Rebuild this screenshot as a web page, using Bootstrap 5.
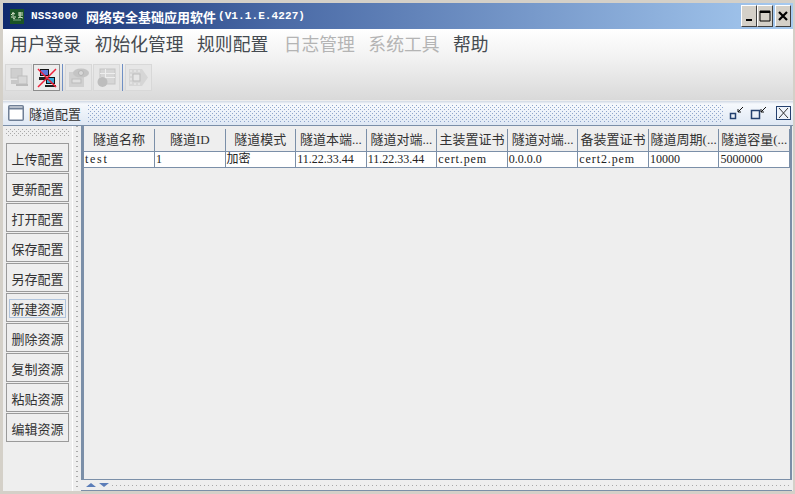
<!DOCTYPE html>
<html lang="zh"><head><meta charset="utf-8"><title>NSS3000</title>
<link href="https://cdn.jsdelivr.net/npm/bootstrap@5.3.0/dist/css/bootstrap.min.css" rel="stylesheet">
<style>
html,body{height:494px;overflow:hidden;background:#d4d0c8}
body{font-family:"Liberation Serif","Noto Sans CJK SC",serif;color:#222}
.app-shell{width:795px;height:494px;padding:3px 2px 3px 3px}
.app-inner{height:488px;background:#eee}
.title-bar{height:26px;background:linear-gradient(90deg,#0f2a6e 0,#4a6aa6 35%,#a6caf0 100%);color:#fff;padding-left:7px}
.title-logo{width:14px;height:15px;margin-right:7px}
.title-mono{font:bold 11px "Liberation Mono",monospace;letter-spacing:.1px}
.title-cn{font:bold 13px "Noto Sans CJK SC",sans-serif;margin:0 2px 0 8px}
.win-btn{width:16px;height:22px;background:#d4d0c8;border:1px solid;border-color:#fff #404040 #404040 #fff;display:flex;align-items:center;justify-content:center;padding:0}
.win-close{margin:0 2px}
.upper-band{height:71px;background:linear-gradient(#fff,#f2f2f2 40%,#d9d9d9)}
.menu-row{height:31px;padding-left:7px;gap:13.5px;font:17.8px "Noto Sans CJK SC",sans-serif;color:#454a50;line-height:28px}
.menu-off{color:#b4b4b4}
.menu-shift{margin-left:2px}
.tool-row{padding:4px 0 0 2px;gap:1px;align-items:center}
.tool-btn{width:27px;height:27px;border:1px solid #d8d8d8;background:#e6e6e6;display:flex;align-items:center;justify-content:center;padding:0}
.tool-on{border-color:#8c8c8c;background:#ececec}
.tool-sep{width:1px;height:27px;background:#6f8fc4;margin:0 1px}
.frame-head{height:25px;margin-top:1px;background:linear-gradient(#d0d8e4,#f6f9fd 3px,#dfe8f4);border-bottom:1px solid #7b8fa8;padding:0 2px 0 5px;color:#333}
.frame-name{font:13px/1 "Noto Sans CJK SC",sans-serif;margin:0 7px 0 5px}
.dots-blue{background-image:conic-gradient(at 1px 1px,transparent 75%,#8fa5cc 0),conic-gradient(at 1px 1px,transparent 75%,#8fa5cc 0);background-size:4px 4px;background-position:0 0,2px 2px}
.dots-grey{background-image:conic-gradient(at 1px 1px,transparent 75%,#a9a9a9 0),conic-gradient(at 1px 1px,transparent 75%,#a9a9a9 0);background-size:4px 4px;background-position:0 0,2px 2px}
.frame-dots{height:17px}
.work-row{min-height:0}
.side-panel{width:70px;background:#eee;border-right:1px solid #fff;padding:3px 0 0 3px}
.side-dots{height:7px;width:63px;margin-bottom:7px}
.side-btn{display:block;width:63px;height:29px;margin-bottom:1px;border:1px solid #9a9a9a;border-radius:0;padding:2px 0 0;background:#eee;color:#333;font:13px/25px "Noto Sans CJK SC",sans-serif}
.side-focus span{display:inline-block;line-height:17px;padding:0 1px;outline:1px solid #b0c4dc}
.side-gap{width:8px;padding-left:3px;background:#eee}
.side-gap i{display:block;width:2px;height:100%;background:repeating-linear-gradient(#a9a9a9 0 1px,transparent 1px 5px)}
.grid-pane{border:solid #7b8fa8;border-width:0 2px 1px 3px;background:#eee;padding-top:3px;margin-right:1px}
.grid-table{table-layout:fixed;width:706px;margin:0;border-collapse:collapse;font-size:12px}
.grid-table th{height:22px;padding:0;background:#eee;color:#333;font:13px/20px "Liberation Serif","Noto Sans CJK SC",serif;text-align:center;border:solid #7b8fa8;border-width:0 1px 1px 0;white-space:nowrap;overflow:hidden}
.grid-table td{height:16px;padding:0 1px;background:#fff;color:#222;font:12px/15px "Liberation Serif","Noto Sans CJK SC",serif;border:solid #7b8fa8;border-width:0 1px 1px 0;white-space:nowrap;overflow:hidden}
.cell-wide{letter-spacing:.9px}
.cell-wider{letter-spacing:1.7px}
.split-foot{height:11px;background:#eee;border-bottom:1px solid #7b8fa8;padding-left:5px;margin-right:1px}
.split-dots{flex:1;height:1px;margin:0 3px 0 3px;background:repeating-linear-gradient(90deg,#a9a9a9 0 1px,transparent 1px 4px)}
.tri-up{width:0;height:0;border:solid transparent;border-width:0 5px 4px;border-bottom-color:#5b7db8}
.tri-down{width:0;height:0;border:solid transparent;border-width:4px 5px 0;border-top-color:#5b7db8;margin-left:3px}
</style></head><body>
<div class="app-shell"><div class="app-inner d-flex flex-column">
  <div class="title-bar d-flex align-items-center">
    <svg class="title-logo" viewBox="0 0 14 15"><rect width="14" height="15" fill="#1a5426"/><path d="M1 6l2-2 2 1M3 3v4M1 8h5M8 4h5M8 6h5M10 3v6M8 9l2-1 3 1M3 9l2 1" stroke="#d8e6cc" fill="none"/><path d="M3 11h8" stroke="#7fa883" fill="none"/></svg>
    <span class="title-mono">NSS3000</span><span class="title-cn">网络安全基础应用软件</span><span class="title-mono">(V1.1.E.4227)</span>
    <div class="d-flex ms-auto">
      <button class="win-btn" aria-label="min"><svg width="10" height="12" viewBox="0 0 10 12"><rect x="2" y="9" width="6" height="2" fill="#000"/></svg></button>
      <button class="win-btn" aria-label="max"><svg width="12" height="12" viewBox="0 0 12 12"><path d="M1 1h10v10H1z" fill="none" stroke="#000"/><path d="M1 2h10" stroke="#000" stroke-width="2"/></svg></button>
      <button class="win-btn win-close" aria-label="close"><svg width="10" height="10" viewBox="0 0 10 10"><path d="M1 1l8 8M9 1l-8 8" stroke="#000" stroke-width="2.2"/></svg></button>
    </div>
  </div>
  <div class="upper-band">
    <div class="menu-row d-flex"><span>用户登录</span><span>初始化管理</span><span>规则配置</span><span class="menu-off menu-shift">日志管理</span><span class="menu-off">系统工具</span><span>帮助</span></div>
    <div class="tool-row d-flex">
      <button class="tool-btn" aria-label="login"><svg width="18" height="19" viewBox="0 0 18 19"><rect x="1" y="0" width="11" height="10" fill="#cfcfcf" stroke="#c2c2c2"/><rect x="8" y="8" width="9" height="8" fill="#d8d8d8" stroke="#bdbdbd"/><path d="M1 12h8v4H1z" fill="#c8c8c8"/><path d="M6 17h12" stroke="#bbb" stroke-width="2"/></svg></button>
      <button class="tool-btn tool-on" aria-label="logout"><svg width="20" height="20" viewBox="0 0 20 20"><rect x="3" y="1" width="9" height="7" fill="#111"/><rect x="4" y="2" width="7" height="5" fill="#5f75d8"/><rect x="9" y="9" width="9" height="7" fill="#111"/><rect x="10" y="10" width="7" height="5" fill="#38a8d8"/><path d="M2 9h9v3H2zM8 17h11v2H8z" fill="#222"/><path d="M1 1l18 18M19 1L1 19" stroke="#f0203a" stroke-width="1.5"/></svg></button>
      <span class="tool-sep"></span>
      <button class="tool-btn" aria-label="view"><svg width="21" height="19" viewBox="0 0 21 19"><rect x="1" y="4" width="15" height="15" fill="#d0d0d0"/><ellipse cx="13" cy="5" rx="8" ry="4.5" fill="#c4c4c4"/><circle cx="13" cy="5" r="2.5" fill="#d8d8d8" stroke="#b4b4b4"/><rect x="4" y="11" width="9" height="4" fill="#e0e0e0" stroke="#bbb"/></svg></button>
      <button class="tool-btn" aria-label="table"><svg width="19" height="19" viewBox="0 0 19 19"><rect x="3" y="1" width="15" height="15" fill="#d6d6d6" stroke="#c4c4c4"/><path d="M3 5.500h15M3 9.500h15M8.500 1v14" stroke="#eee"/><circle cx="5.500" cy="14" r="5" fill="#bdbdbd"/></svg></button>
      <span class="tool-sep"></span>
      <button class="tool-btn" aria-label="next"><svg width="21" height="19" viewBox="0 0 21 19"><path d="M1 1h13l6 8.500-6 8.500H1z" fill="#d6d6d6"/><rect x="5" y="6" width="7" height="7" fill="#e6e6e6" stroke="#bbb"/><path d="M2 3h2M2 7h2M2 11h2M2 15h2M6 3h2M10 3h2M6 16h2M10 16h2" stroke="#eee"/></svg></button>
    </div>
  </div>
  <div class="frame-head d-flex align-items-center">
    <svg width="16" height="16" viewBox="0 0 16 16"><rect x=".75" y=".75" width="14.5" height="14.5" rx="1" fill="#fff" stroke="#6f7f96" stroke-width="1.5"/><path d="M1 3.500h14" stroke="#6f7f96" stroke-width="2"/></svg>
    <span class="frame-name">隧道配置</span>
    <div class="frame-dots dots-blue flex-fill"></div>
    <svg class="ms-1" width="18" height="14" viewBox="0 0 18 14"><rect x="2.500" y="7.500" width="5" height="5" fill="none" stroke="#24406e" stroke-width="1.500"/><path d="M15 1l-5 5M10 3v3h3" stroke="#111" fill="none"/></svg>
    <svg class="ms-1" width="18" height="14" viewBox="0 0 18 14"><rect x="1.500" y="4.500" width="8" height="8" fill="none" stroke="#24406e" stroke-width="1.500"/><path d="M16 1l-5 5M11 3v3h3" stroke="#111" fill="none"/></svg>
    <svg class="ms-2" width="15" height="14" viewBox="0 0 15 14"><rect x=".5" y=".5" width="14" height="13" fill="#eef3fa" stroke="#24406e"/><path d="M3 2l9 10M12 2L3 12" stroke="#333"/></svg>
  </div>
  <div class="work-row d-flex flex-fill">
    <div class="side-panel">
      <div class="side-dots dots-grey"></div>
      <button class="side-btn">上传配置</button><button class="side-btn">更新配置</button><button class="side-btn">打开配置</button><button class="side-btn">保存配置</button><button class="side-btn">另存配置</button><button class="side-btn side-focus"><span>新建资源</span></button><button class="side-btn">删除资源</button><button class="side-btn">复制资源</button><button class="side-btn">粘贴资源</button><button class="side-btn">编辑资源</button>
    </div>
    <div class="side-gap"><i></i></div>
    <div class="d-flex flex-column flex-fill">
      <div class="grid-pane flex-fill">
        <table class="grid-table">
          <thead><tr><th>隧道名称</th><th>隧道ID</th><th>隧道模式</th><th>隧道本端...</th><th>隧道对端...</th><th>主装置证书</th><th>隧道对端...</th><th>备装置证书</th><th>隧道周期(...</th><th>隧道容量(...</th></tr></thead>
          <tbody><tr><td class="cell-wider">test</td><td>1</td><td>加密</td><td>11.22.33.44</td><td>11.22.33.44</td><td class="cell-wide">cert.pem</td><td>0.0.0.0</td><td class="cell-wide">cert2.pem</td><td>10000</td><td>5000000</td></tr></tbody>
        </table>
      </div>
      <div class="split-foot d-flex align-items-center"><span class="tri-up"></span><span class="tri-down"></span><span class="split-dots"></span></div>
    </div>
  </div>
</div></div>
</body></html>
